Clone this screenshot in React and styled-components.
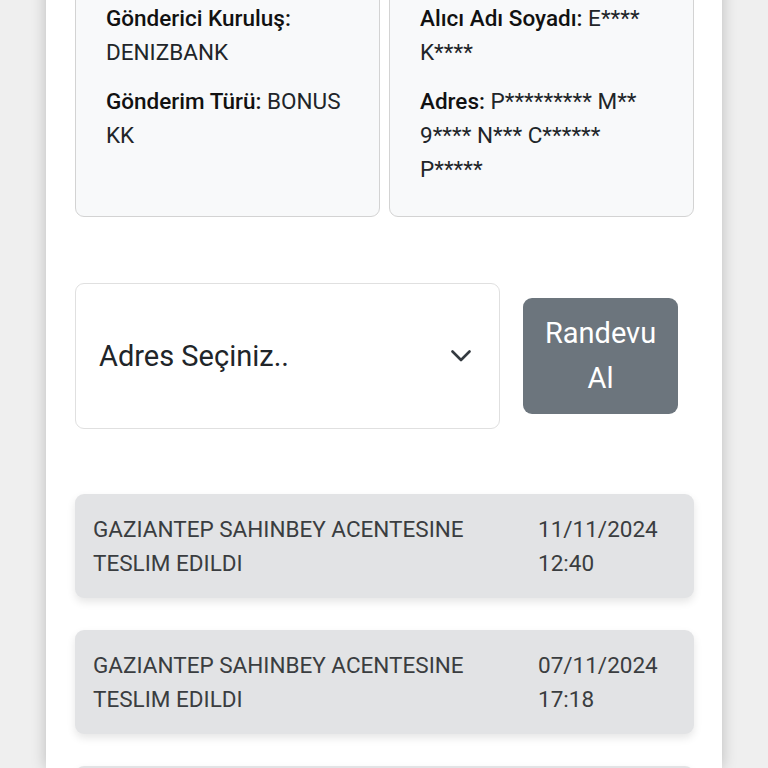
import React from "react";
import styled, { createGlobalStyle } from "styled-components";

const Global = createGlobalStyle`
  html, body {
    margin: 0;
    padding: 0;
    background: #efefef;
    font-family: Roboto, "Noto Sans", "Liberation Sans", sans-serif;
    color: #212529;
    overflow: hidden;
  }
  * { box-sizing: border-box; }
`;

const Page = styled.div`
  width: 768px;
  height: 768px;
  overflow: hidden;
  display: flex;
  justify-content: flex-start;
`;

const Panel = styled.main`
  margin-left: 46px;
  width: 676px;
  margin-top: -24px;
  background: #fff;
  box-shadow: 0 0 14px rgba(0, 0, 0, 0.22);
  padding: 0 28px 0 29px;
`;

const InfoGrid = styled.section`
  display: grid;
  grid-template-columns: 305px 305px;
  gap: 9px;
`;

const InfoCard = styled.div`
  background: #f8f9fa;
  border: 1.5px solid #d3d3d3;
  border-radius: 9px;
  padding: 24px ${(p) => p.$padRight}px 30px 30px;
`;

const Field = styled.p`
  margin: 0 0 15px;
  font-size: 22.5px;
  line-height: 34px;
  color: #212529;
  &:last-child { margin-bottom: 0; }
  b { font-weight: 500; color: #111; }
`;

const SelectRow = styled.div`
  display: flex;
  align-items: center;
  gap: 23px;
  margin-top: 66px;
`;

const SelectBox = styled.div`
  width: 425px;
  height: 146px;
  border: 1.5px solid #e0e0e0;
  border-radius: 9px;
  display: flex;
  align-items: center;
  justify-content: space-between;
  padding: 0 28px 0 23px;
  font-size: 29px;
  color: #212529;
`;

const Button = styled.button`
  width: 155px;
  height: 116px;
  background: #6c757d;
  border: none;
  border-radius: 9px;
  color: #fff;
  font: inherit;
  font-size: 29px;
  line-height: 45px;
  padding: 0 14px;
  text-align: center;
`;

const Timeline = styled.section`
  display: flex;
  flex-direction: column;
  gap: 32px;
  margin-top: 65px;
`;

const Event = styled.div`
  background: #e2e3e5;
  border-radius: 9px;
  box-shadow: 0 4px 8px rgba(0, 0, 0, 0.1);
  padding: 18px 20px 18px 18px;
  display: flex;
  justify-content: space-between;
  min-height: 104px;
  font-size: 22.5px;
  line-height: 34px;
  color: #3a3d40;
`;

const EventText = styled.div`
  width: 380px;
`;

const EventDate = styled.div`
  width: 136px;
`;

const Chevron = () => (
  <svg width="20" height="12" viewBox="0 0 20 12" fill="none">
    <path d="M1.5 1.5 L10 10 L18.5 1.5" stroke="#343a40" strokeWidth="2.6" strokeLinecap="round" strokeLinejoin="round" />
  </svg>
);

const events = [
  { text: "GAZIANTEP SAHINBEY ACENTESINE TESLIM EDILDI", date: "11/11/2024", time: "12:40" },
  { text: "GAZIANTEP SAHINBEY ACENTESINE TESLIM EDILDI", date: "07/11/2024", time: "17:18" },
  { text: "GAZIANTEP SAHINBEY ACENTESINE TESLIM EDILDI", date: "06/11/2024", time: "10:02" },
];

export default function App() {
  return (
    <>
      <Global />
      <Page>
        <Panel>
          <InfoGrid>
            <InfoCard $padRight={16}>
              <Field><b>Gönderici Kuruluş:</b> DENIZBANK</Field>
              <Field><b>Gönderim Türü:</b> BONUS KK</Field>
            </InfoCard>
            <InfoCard $padRight={40}>
              <Field><b>Alıcı Adı Soyadı:</b> E**** K****</Field>
              <Field><b>Adres:</b> P********* M** 9**** N*** C****** P*****</Field>
            </InfoCard>
          </InfoGrid>
          <SelectRow>
            <SelectBox>
              <span>Adres Seçiniz..</span>
              <Chevron />
            </SelectBox>
            <Button>Randevu Al</Button>
          </SelectRow>
          <Timeline>
            {events.map((e, i) => (
              <Event key={i}>
                <EventText>{e.text}</EventText>
                <EventDate>{e.date}<br />{e.time}</EventDate>
              </Event>
            ))}
          </Timeline>
        </Panel>
      </Page>
    </>
  );
}
